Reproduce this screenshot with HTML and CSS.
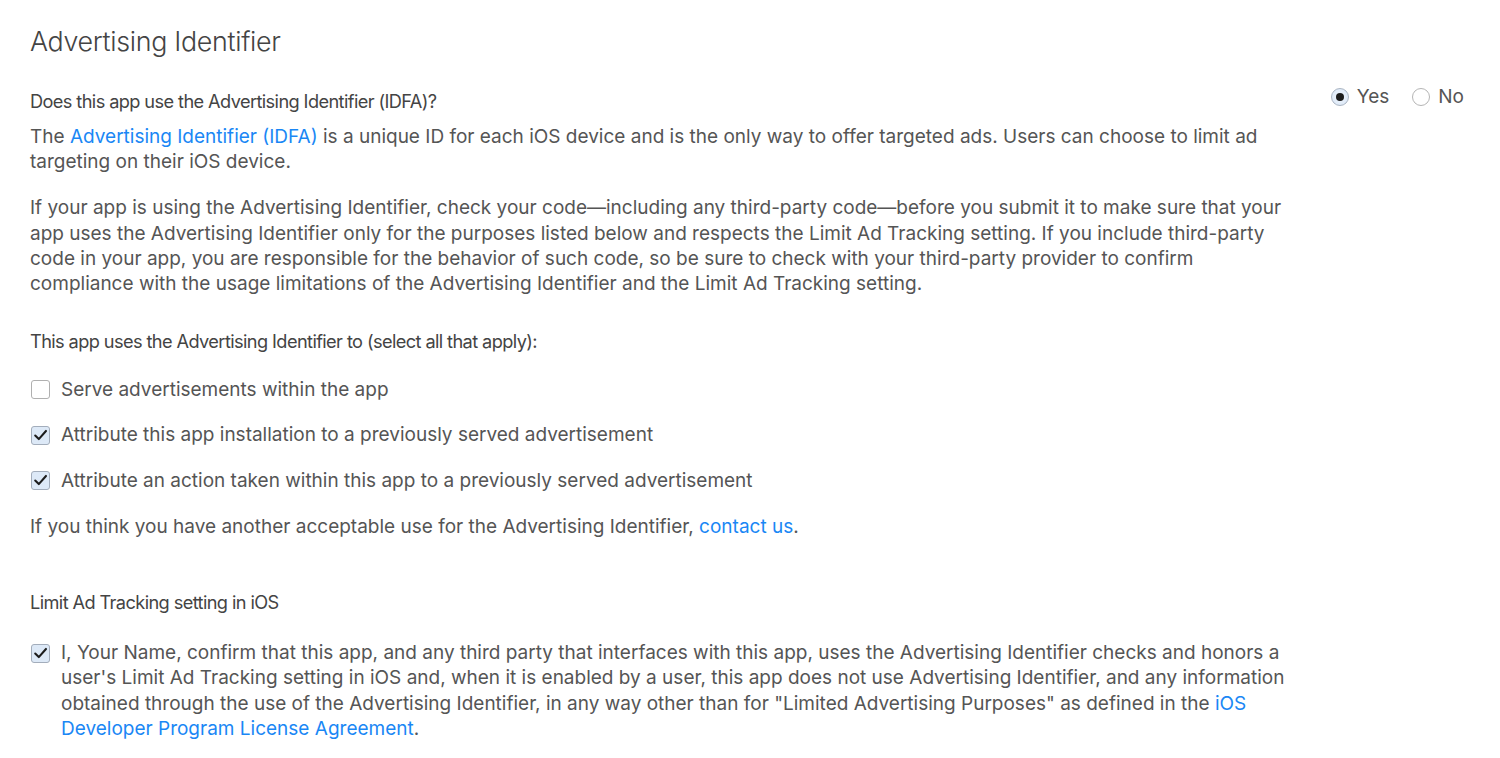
FILE: index.html
```html
<!DOCTYPE html>
<html>
<head>
<meta charset="utf-8">
<link rel="stylesheet" href="styles.css">
</head>
<body>
<main class="page">
  <h1 class="title">Advertising Identifier</h1>

  <div class="question-row">
    <div class="label">Does this app use the Advertising Identifier (IDFA)?</div>
    <div class="radios">
      <span class="radio-opt"><span class="radio checked"></span>Yes</span>
      <span class="radio-opt"><span class="radio"></span>No</span>
    </div>
  </div>

  <div class="content">
    <p class="para p1">The <a class="link">Advertising Identifier (IDFA)</a> is a unique ID for each iOS device and is the only way to offer targeted ads. Users can choose to limit ad targeting on their iOS device.</p>

    <p class="para p2">If your app is using the Advertising Identifier, check your code—including any third-party code—before you submit it to make sure that your app uses the Advertising Identifier only for the purposes listed below and respects the Limit Ad Tracking setting. If you include third-party code in your app, you are responsible for the behavior of such code, so be sure to check with your third-party provider to confirm compliance with the usage limitations of the Advertising Identifier and the Limit Ad Tracking setting.</p>

    <div class="label l-uses">This app uses the Advertising Identifier to (select all that apply):</div>

    <div class="check-row first"><span class="box"></span><span class="check-text">Serve advertisements within the app</span></div>
    <div class="check-row"><span class="box checked"><svg viewBox="0 0 18 18"><path d="M3.4 9 L7.2 12.8 L14.8 4.2" fill="none" stroke="#1c1c1c" stroke-width="2.2" stroke-linecap="round" stroke-linejoin="round"/></svg></span><span class="check-text">Attribute this app installation to a previously served advertisement</span></div>
    <div class="check-row"><span class="box checked"><svg viewBox="0 0 18 18"><path d="M3.4 9 L7.2 12.8 L14.8 4.2" fill="none" stroke="#1c1c1c" stroke-width="2.2" stroke-linecap="round" stroke-linejoin="round"/></svg></span><span class="check-text">Attribute an action taken within this app to a previously served advertisement</span></div>

    <p class="para p3">If you think you have another acceptable use for the Advertising Identifier, <a class="link">contact us</a>.</p>

    <div class="label l-limit">Limit Ad Tracking setting in iOS</div>

    <div class="check-row confirm"><span class="box checked"><svg viewBox="0 0 18 18"><path d="M3.4 9 L7.2 12.8 L14.8 4.2" fill="none" stroke="#1c1c1c" stroke-width="2.2" stroke-linecap="round" stroke-linejoin="round"/></svg></span><span class="check-text">I, Your Name, confirm that this app, and any third party that interfaces with this app, uses the Advertising Identifier checks and honors a user's Limit Ad Tracking setting in iOS and, when it is enabled by a user, this app does not use Advertising Identifier, and any information obtained through the use of the Advertising Identifier, in any way other than for "Limited Advertising Purposes" as defined in the <a class="link">iOS Developer Program License Agreement</a>.</span></div>
  </div>
</main>
</body>
</html>
```

FILE: styles.css
```css
html, body {
  margin: 0;
  padding: 0;
  background: #ffffff;
}

body {
  font-family: Inter, "Noto Sans", "Liberation Sans", sans-serif;
  color: #555555;
  -webkit-font-smoothing: antialiased;
}

.page {
  padding: 25px 36px 0 30px;
}

.title {
  margin: 0;
  font-size: 26.8px;
  line-height: 32px;
  font-weight: 300;
  color: #444444;
  letter-spacing: -0.3px;
}

.question-row {
  display: flex;
  justify-content: space-between;
  align-items: center;
  margin-top: 31.5px;
}

.label {
  font-size: 18.2px;
  line-height: 24px;
  letter-spacing: -0.6px;
  color: #444444;
}

.radios {
  display: flex;
  gap: 23px;
  margin-top: -8px;
  font-size: 19px;
  color: #555555;
}

.radio-opt {
  display: flex;
  align-items: center;
  gap: 8px;
}

.radio {
  width: 16px;
  height: 16px;
  border: 1px solid #b5b5b5;
  border-radius: 50%;
  background: #ffffff;
  display: flex;
  align-items: center;
  justify-content: center;
}

.radio.checked {
  background: radial-gradient(circle, #eef4fc 0%, #d9e6f6 100%);
  border-color: #a9b4c2;
}

.radio.checked::after {
  content: "";
  width: 8px;
  height: 8px;
  border-radius: 50%;
  background: #1c1c1c;
}

.content {
  width: 1262px;
}

.para {
  margin: 0;
  font-size: 19px;
  line-height: 25.4px;
}

.p1 {
  margin-top: 11px;
}

.p2 {
  margin-top: 20.8px;
}

.l-uses {
  margin-top: 32.5px;
}

.check-row {
  display: flex;
  align-items: flex-start;
  gap: 11px;
  font-size: 19px;
  line-height: 25.4px;
  margin-top: 20.2px;
  padding-left: 1px;
}

.check-row.first {
  margin-top: 23.5px;
}

.check-text {
  flex: 1;
}

.box {
  flex: none;
  width: 17px;
  height: 17px;
  margin-top: 3.5px;
  border: 1px solid #b0b0b0;
  border-radius: 3px;
  background: #ffffff;
  display: flex;
}

.box.checked {
  background: #dde9f7;
  border-color: #a3adbb;
}

.box svg {
  width: 17px;
  height: 17px;
}

.p3 {
  margin-top: 20.8px;
}

.l-limit {
  margin-top: 50px;
}

.check-row.confirm {
  margin-top: 26.5px;
}

.link {
  color: #1a87f5;
  text-decoration: none;
}
```
